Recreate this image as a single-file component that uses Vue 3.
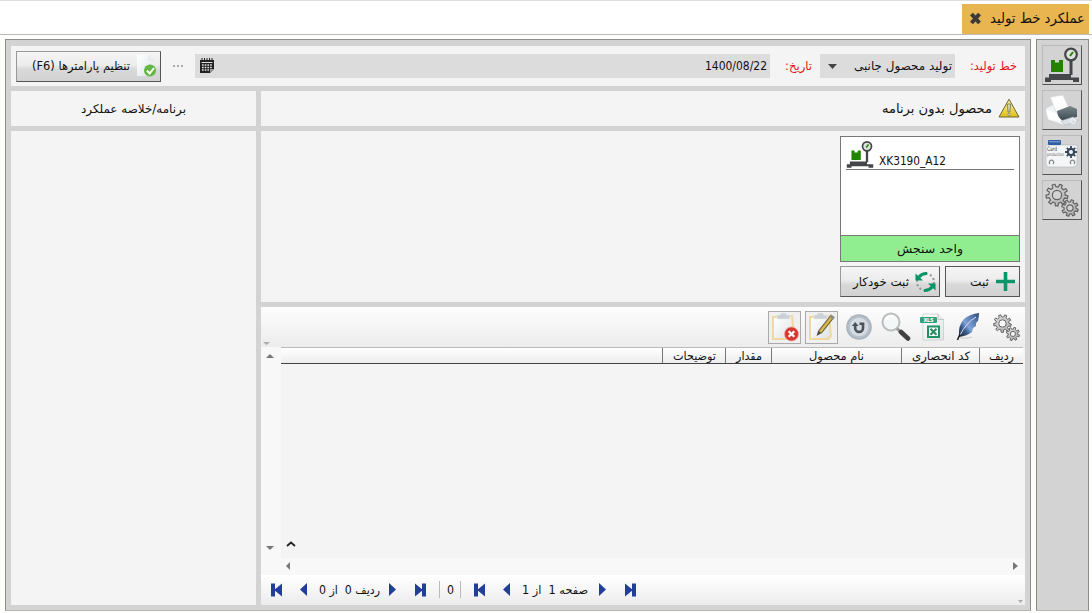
<script setup>
import { h } from 'vue'

// Single-line label condensed to a given width, centred on its own line box.
const Label = (props) =>
  h('svg', { class: 'label', width: props.w, height: 20, viewBox: `0 0 ${props.w} 20` }, [
    h('text', {
      x: props.w / 2,
      y: 14,
      fill: 'currentColor',
      'text-anchor': 'middle',
      textLength: props.w,
      lengthAdjust: 'spacingAndGlyphs',
      direction: props.ltr ? 'ltr' : 'rtl',
      'font-size': props.size || 12,
    }, props.text),
  ])
Label.props = { w: Number, text: String, size: Number, ltr: Boolean }

// Toothed ring outline with a round hole.
const gear = (cx, cy, outer, inner, hole, teeth, turn = 0) => {
  const step = (Math.PI * 2) / teeth
  const at = (r, a) => `${(cx + r * Math.cos(a)).toFixed(2)} ${(cy + r * Math.sin(a)).toFixed(2)}`
  let d = ''
  for (let i = 0; i < teeth; i++) {
    const a = i * step + turn
    d += `${i ? 'L' : 'M'}${at(inner, a - step * 0.27)}L${at(outer, a - step * 0.19)}L${at(outer, a + step * 0.19)}L${at(inner, a + step * 0.27)}`
  }
  return `${d}ZM${at(hole, 0)}a${hole} ${hole} 0 1 0 ${-2 * hole} 0a${hole} ${hole} 0 1 0 ${2 * hole} 0Z`
}
const bigGear = gear(13, 13, 11, 8.2, 4.6, 9, 0.2)
const smallGear = gear(26, 26, 8.3, 6, 3.2, 8, 0.3)
const cardGear = gear(27, 15, 6, 4.3, 2, 8)

const columns = [
  { title: '', w: 0, cell: 'blank' },
  { title: 'توضیحات', w: 43, cell: 'notes' },
  { title: 'مقدار', w: 26, cell: 'amount' },
  { title: 'نام محصول', w: 55, cell: 'product' },
  { title: 'کد انحصاری', w: 58, cell: 'code' },
  { title: 'ردیف', w: 25, cell: 'row' },
]
const side = ['scale', 'printer', 'card', 'gears']
</script>

<template>
  <div class="app">
    <svg class="defs" width="0" height="0">
      <defs>
        <linearGradient id="yellow" x1="0" y1="0" x2="0" y2="1"><stop offset="0" stop-color="#fff6ac" /><stop offset="1" stop-color="#dfc014" /></linearGradient>
        <linearGradient id="feather" x1="1" y1="0" x2="0" y2="1"><stop offset="0" stop-color="#34496a" /><stop offset=".25" stop-color="#5578b0" /><stop offset=".55" stop-color="#7fa3d8" /><stop offset=".72" stop-color="#3c5a8c" /><stop offset="1" stop-color="#1c2430" /></linearGradient>
        <linearGradient id="dark" x1="0" y1="0" x2="0" y2="1"><stop offset="0" stop-color="#7b878d" /><stop offset="1" stop-color="#3b474e" /></linearGradient>
        <radialGradient id="disc"><stop offset="0" stop-color="#dfe5ec" /><stop offset=".75" stop-color="#bcc6d0" /><stop offset="1" stop-color="#a3aeb9" /></radialGradient>
        <linearGradient id="paper" x1="0" y1="0" x2="1" y2="1"><stop offset="0" stop-color="#fff" /><stop offset="1" stop-color="#dfe3e6" /></linearGradient>
        <linearGradient id="steel" x1="0" y1="0" x2="1" y2="1"><stop offset="0" stop-color="#e2e2e2" /><stop offset="1" stop-color="#a9a9a9" /></linearGradient>
        <symbol id="scale" viewBox="0 0 36 36">
          <path fill="#444649" d="M1 30.5h4V27h22v3.500h8V35h-6v-2H7v2H1z" />
          <path fill="#444649" d="M25.500 12h3v16h-3z" />
          <path fill="#218300" d="M7 13h4v2.500h4V13h4v12H7z" />
          <circle cx="27" cy="7.500" r="5.800" fill="#dde3dd" stroke="#444649" stroke-width="2.200" />
          <path d="M26 9l3-4" stroke="#218300" stroke-width="2" />
        </symbol>
        <symbol id="printer" viewBox="0 0 36 36">
          <path d="M2 16l8-4 22 6 2 9-15 6-15-5q-3-6-2-12z" fill="#f1f3f5" stroke="#c5c9cc" stroke-width=".6" />
          <path d="M6 5l13-2 6 13-13 4z" fill="#fefefe" stroke="#d0d0d0" stroke-width=".6" />
          <path d="M13 19l13-5 7 3v8l-14 4-5-4z" fill="url(#dark)" />
          <path d="M2 17l11 5 5 8-13-3z" fill="#fff" />
          <path d="M17 29l12-4 5 3-2 2-11 3z" fill="#dde2e7" stroke="#adb5bd" stroke-width=".6" />
          <circle cx="29" cy="29" r="2.500" fill="none" stroke="#f7f7f7" />
        </symbol>
        <symbol id="card" viewBox="0 0 36 36">
          <path d="M2 8h31v20l-3 2H4l-2-2z" fill="#f4f5f6" stroke="#b6bbc0" stroke-width=".7" />
          <rect x="4" y="3" width="13" height="5" rx="1" fill="#315d9e" /><path d="M5 4h11v1.400H5z" fill="#6f95ca" />
          <text x="3" y="14" font-size="6" fill="#454545" textLength="10" lengthAdjust="spacingAndGlyphs">Card</text>
          <text x="3" y="18.500" font-size="4.500" fill="#555" textLength="17" lengthAdjust="spacingAndGlyphs">production</text>
          <path :d="cardGear" fill="#38475c" fill-rule="evenodd" />
          <path d="M6 27a2.200 2.200 0 1 1 3 0M27 27a2.200 2.200 0 1 1 3 0" fill="none" stroke="#888" stroke-width="1.300" />
        </symbol>
        <symbol id="gears" viewBox="0 0 36 36">
          <g fill="url(#steel)" fill-rule="evenodd" stroke="#626262" stroke-width="1.200" stroke-linejoin="round">
            <path :d="bigGear" /><path :d="smallGear" />
          </g>
        </symbol>
        <symbol id="clipboard" viewBox="0 0 30 30">
          <path d="M3 4l21-1 2 21-3 4H3z" fill="#efd9a0" />
          <path d="M5 6l17-1 2 18-3 3H5z" fill="url(#paper)" />
          <path d="M8 3h3l1-2h5l1 2h3v4H8z" fill="#cbd0d4" stroke="#e8ebed" stroke-width=".6" />
        </symbol>
        <symbol id="first" viewBox="0 0 12 14"><path d="M0 .5h4v5.700L11 .5v13L4 7.800v5.700H0z" fill="#213f99" /></symbol>
        <symbol id="prev" viewBox="0 0 7 13"><path d="M7 0v13L0 6.500z" fill="#213f99" /></symbol>
      </defs>
    </svg>

    <header class="tabs">
      <div class="tab">
        <svg width="13" height="13" viewBox="0 0 13 13"><path d="M2.500 2l8 9M10.500 2l-8 9" stroke="#3b3a35" stroke-width="4" /></svg>
        <Label :w="95" :size="14" text="عملکرد خط تولید" />
      </div>
    </header>

    <div class="workspace">
      <main class="frame">
        <section class="panel filters">
          <button class="btn settings">
            <Label :w="98" text="تنظیم پارامترها (F6)" />
            <svg width="21" height="24" viewBox="0 0 21 24">
              <path d="M1 1h12l5 5v16H1z" fill="url(#paper)" /><path d="M13 1v5h5" fill="#edf0f1" stroke="#d8dcde" stroke-width=".6" />
              <circle cx="14" cy="16.500" r="6" fill="#62b843" /><path d="M11 16.500l2.700 3 4.300-5.500" fill="none" stroke="#fff" stroke-width="2" />
            </svg>
          </button>
          <span class="dots"><i /><i /><i /></span>
          <div class="field date">
            <svg width="16" height="16" viewBox="0 0 16 16">
              <path d="M1 2h14v9l-4 4H1z" fill="#222" /><path d="M3 0v3M5.500 0v3M8 0v3M10.500 0v3M13 0v3" stroke="#222" />
              <path d="M2.500 4.500h11" stroke="#ddd" /><path d="M3 7h10M3 9.500h10M3 12h7" stroke="#ddd" stroke-width="1.500" stroke-dasharray="1.700 1" /><path d="M11 11h4l-4 4z" fill="#999" />
            </svg>
            <Label :w="62" ltr :size="12.5" text="1400/08/22" />
          </div>
          <Label class="red date-name" :w="27" text="تاریخ:" />
          <div class="field line">
            <svg width="9" height="5" viewBox="0 0 9 5"><path d="M0 0h9L4.500 5z" fill="#444" /></svg>
            <Label :w="98" text="تولید محصول جانبی" />
          </div>
          <Label class="red line-name" :w="47" text="خط تولید:" />
        </section>

        <div class="columns">
          <aside class="summary">
            <div class="panel heading centered"><Label :w="105" text="برنامه/خلاصه عملکرد" /></div>
            <div class="panel grow" />
          </aside>
          <div class="content">
            <div class="panel heading unplanned">
              <Label :w="110" :size="13" text="محصول بدون برنامه" />
              <svg width="22" height="21" viewBox="0 0 22 21"><path d="M11 1.200L21 19H1z" fill="url(#yellow)" stroke="#6b6637" stroke-linejoin="round" /><path d="M9.500 6h3l-.6 8h-1.800z" fill="#e4e1cb" stroke="#6d694b" stroke-width=".8" /><circle cx="11" cy="16.400" r="1.200" fill="#e8e4c8" stroke="#6d694b" stroke-width=".6" /></svg>
            </div>

            <div class="panel devices">
              <div class="device">
                <div class="device-head">
                  <svg width="28" height="29"><use href="#scale" /></svg>
                  <Label :w="67" ltr :size="12.5" text="XK3190_A12" />
                </div>
                <div class="device-body" />
                <div class="unit"><Label :w="66" text="واحد سنجش" /></div>
              </div>
              <div class="actions">
                <button class="btn auto">
                  <Label :w="56" text="ثبت خودکار" />
                  <svg width="21" height="22" viewBox="0 0 21 22"><circle cx="10.500" cy="11" r="8.500" fill="none" stroke="#969a9e" stroke-width="2.200" stroke-dasharray="2 2.450" /><path d="M3.500 5.500Q7 1.500 12 2.300" stroke="#f0f0f0" stroke-width="5" fill="none" /><path d="M17.500 16.500Q14 20.500 9 19.700" stroke="#dadada" stroke-width="5" fill="none" /><path d="M4 6Q7 2.200 12 2.500M17 16Q14 19.800 9 19.500" stroke="#079465" stroke-width="3" fill="none" /><path d="M.5 2.500V9.500h7.500zM20.500 19.500v-7H13z" fill="#079465" /></svg>
                </button>
                <button class="btn save">
                  <Label :w="19" text="ثبت" />
                  <svg width="19" height="19" viewBox="0 0 19 19"><path d="M9.500 0v19M0 9.500h19" stroke="#0a966b" stroke-width="3.600" /></svg>
                </button>
              </div>
            </div>

            <div class="grid-panel">
              <div class="toolbar">
                <svg class="overflow" width="7" height="3"><path d="M0 0h7L3.500 3z" fill="#aaa" /></svg>
                <span class="boxed"><svg width="31" height="30" viewBox="0 0 31 30"><use href="#clipboard" width="30" height="30" /><circle cx="22.500" cy="22" r="7" fill="#d93830" stroke="#eaa09a" stroke-width=".7" /><path d="M19.700 19.200l5.600 5.600M25.300 19.200l-5.600 5.600" stroke="#fff" stroke-width="2.200" /></svg></span>
                <span class="boxed"><svg width="31" height="30" viewBox="0 0 31 30"><use href="#clipboard" width="30" height="30" /><path d="M25.500 5.500L14 20" stroke="#6b6448" stroke-width="4.500" /><path d="M25.500 5.500L14 20" stroke="#dab642" stroke-width="2.500" /><path d="M12.300 18.500L10.500 24l5-2.800z" fill="#4d4a44" /><path d="M24 3.500l4 3" stroke="#8f8b86" stroke-width="3" /></svg></span>
                <svg class="refresh" width="28" height="28" viewBox="0 0 28 28"><circle cx="14" cy="14" r="12.800" fill="url(#disc)" /><circle cx="14" cy="14" r="9.800" fill="#d4dbe2" stroke="#b6bfc8" /><path d="M10.200 12v3a3.900 3.900 0 0 0 7.800 0v-4" fill="none" stroke="#4a525c" stroke-width="2.600" /><path d="M6.800 13l3.400-4 3.400 4zM14.500 9.500h4.800v2.500h-4.800z" fill="#4a525c" /></svg>
                <svg class="search" width="30" height="30" viewBox="0 0 30 30"><circle cx="10" cy="10" r="8.500" fill="#f4f7f8" stroke="#bbbebf" stroke-width="2" /><path d="M4.500 8q3-4.500 8-3.500" stroke="#fff" stroke-width="2" fill="none" /><path d="M16 16.500l3.500 3.500" stroke="#989898" stroke-width="3" /><path d="M20 20l7 6.500" stroke="#414141" stroke-width="4.600" stroke-linecap="round" /></svg>
                <svg class="xls" width="26" height="28" viewBox="0 0 26 28"><path d="M4 1h15l5.500 5.500V27H4z" fill="url(#paper)" stroke="#c3c8c8" stroke-width=".7" /><path d="M19 1v5.500h5.500" fill="#eee" stroke="#aaa" stroke-width=".6" /><rect x="1" y="4" width="17" height="6" rx="1" fill="#36a07a" /><text x="4.500" y="9" font-size="5.500" font-weight="bold" fill="#fff" textLength="10">XLS</text><path d="M9 13.500h11v10.500H9z" fill="#fff" stroke="#239263" stroke-width="2" /><path d="M11.500 15.800l6 6M17.500 15.800l-6 6" stroke="#239263" stroke-width="2.200" /></svg>
                <svg class="quill" width="24" height="28" viewBox="0 0 24 28"><path d="M23 0Q14 1 8 6 2 12 3 24q8-1 13-5l1-4 3-2v-3l2-2q1-4 1-8z" fill="url(#feather)" /><path d="M20 4Q10 10 4 22" fill="none" stroke="#d9e5f5" /><path d="M4 21l-2.500 6" stroke="#222" stroke-width="1.600" /><path d="M4 25q7 1 12-1" stroke="#ccc" fill="none" /></svg>
                <svg class="cogs" width="29" height="29"><use href="#gears" /></svg>
              </div>
              <div class="table">
                <div class="vscroll">
                  <svg width="8" height="4"><path d="M0 4h8L4 0z" fill="#777" /></svg>
                  <svg width="8" height="4"><path d="M0 0h8L4 4z" fill="#777" /></svg>
                </div>
                <div class="sheet">
                  <div class="thead">
                    <div v-for="c in columns" :key="c.cell" :class="['th', c.cell]"><Label v-if="c.title" :w="c.w" :size="11.5" :text="c.title" /></div>
                  </div>
                  <div class="rows"><svg width="10" height="6" viewBox="0 0 10 6"><path d="M1 5l4-3.500L9 5" fill="none" stroke="#222" stroke-width="1.800" /></svg></div>
                  <div class="hscroll">
                    <svg width="4" height="8"><path d="M4 0v8L0 4z" fill="#777" /></svg>
                    <svg width="5" height="8"><path d="M0 0v8l5-4z" fill="#777" /></svg>
                  </div>
                </div>
              </div>
              <footer class="pager">
                <svg class="end" width="12" height="14"><use href="#first" /></svg>
                <svg class="step" width="7" height="13"><use href="#prev" /></svg>
                <Label :w="61" :size="11.5" text="ردیف&#160;0&#160; از&#160;0" />
                <svg class="step flip" width="7" height="13"><use href="#prev" /></svg>
                <svg class="end flip" width="12" height="14"><use href="#first" /></svg>
                <span class="count"><Label :w="7" ltr text="0" /></span>
                <svg class="end" width="12" height="14"><use href="#first" /></svg>
                <svg class="step" width="7" height="13"><use href="#prev" /></svg>
                <Label :w="66" :size="11.5" text="صفحه&#160;1&#160; از&#160;1" />
                <svg class="step flip" width="7" height="13"><use href="#prev" /></svg>
                <svg class="end flip" width="12" height="14"><use href="#first" /></svg>
                <svg class="more" width="5" height="3"><path d="M0 0h5L2.500 3z" fill="#aaa" /></svg>
              </footer>
            </div>
          </div>
        </div>
      </main>

      <nav class="frame rail">
        <button v-for="name in side" :key="name" class="rail-btn"><svg width="36" height="36"><use :href="'#' + name" /></svg></button>
      </nav>
    </div>
  </div>
</template>

<style>
body { background: #fff; }
</style>

<style scoped>
* { box-sizing: border-box; }
.app { width: 1092px; height: 613px; overflow: hidden; display: flex; flex-direction: column; background: #fdfdfb; color: #111; font-family: "DejaVu Sans Condensed", "DejaVu Sans", sans-serif; }
.defs { position: absolute; }
svg { display: block; flex: none; }
.label { overflow: visible; }
button { font: inherit; color: inherit; padding: 0; }
.tabs { height: 35px; flex: none; display: flex; justify-content: flex-end; align-items: flex-end; padding-right: 3px; background: #fff; border-top: 1px solid #ddd; border-bottom: 1px solid #bbb; }
.tab { width: 127px; height: 30px; background: #e9b550; display: flex; align-items: center; padding: 0 4px 1px 7px; justify-content: space-between; }
.workspace { margin-top: 4px; height: 572px; display: flex; gap: 5px; padding-left: 5px; }
.frame { background: #d3d3d3; border: 1px solid #8c8c8c; border-bottom-color: #b5b5b5; }
main.frame { width: 1026px; padding: 6px 5px 5px; display: flex; flex-direction: column; gap: 5px; }
.panel { background: #f4f4f4; }
.filters { height: 40px; flex: none; display: flex; align-items: center; padding: 0 8px 0 5px; }
.btn { height: 31px; display: flex; align-items: center; background: linear-gradient(#f5f5f5, #ececec 45%, #d9d9d9 60%, #d2d2d2); border: 1px solid #999; border-right-color: #555; border-bottom-color: #555; }
.settings { width: 145px; justify-content: flex-end; gap: 6px; padding-right: 3px; }
.dots { display: flex; gap: 2px; margin-left: 12px; }
.dots i { width: 2px; height: 2px; background: #aaa; }
.field { height: 24px; background: #dcdcdc; display: flex; align-items: center; justify-content: space-between; }
.date { width: 575px; margin-left: 12px; padding: 0 3px 0 4px; }
.date-name { margin-left: 15px; }
.line { width: 135px; margin-left: 8px; padding: 0 3px 0 8px; }
.line-name { margin-left: auto; }
.red { color: #e0161b; }
.columns { flex: 1; display: flex; gap: 5px; min-height: 0; }
.summary, .content { display: flex; flex-direction: column; gap: 5px; }
.summary { width: 245px; }
.content { flex: 1; }
.grow { flex: 1; }
.heading { height: 35px; flex: none; display: flex; align-items: center; }
.centered { justify-content: center; }
.unplanned { justify-content: flex-end; gap: 6px; padding-right: 5px; }
.devices { height: 171px; flex: none; display: flex; flex-direction: column; align-items: flex-end; gap: 4px; padding: 5px 5px 0; }
.device { width: 180px; height: 126px; border: 1px solid #777; background: #fff; display: flex; flex-direction: column; }
.device-head { height: 33px; margin: 0 5px; border-bottom: 1px solid #777; display: flex; gap: 5px; padding-top: 3px; align-items: flex-start; }
.device-head .label { margin-top: 11px; }
.device-body { flex: 1; }
.unit { height: 26px; border-top: 1px solid #777; background: #90ee90; display: flex; justify-content: center; align-items: center; }
.actions { display: flex; gap: 5px; }
.auto { width: 100px; justify-content: flex-end; gap: 6px; padding-right: 3px; }
.save { width: 75px; justify-content: flex-end; gap: 7px; padding-right: 4px; border-color: #555; }
.grid-panel { flex: 1; display: flex; flex-direction: column; min-height: 0; }
.toolbar { height: 40px; display: flex; align-items: center; justify-content: flex-end; padding-right: 4px; background: linear-gradient(#fdfdfd, #ececec); }
.overflow { margin: 33px auto 0 2px; }
.boxed { width: 33px; height: 33px; border: 1px solid #aaa; background: #f0f0f0; margin-right: 4px; }
.refresh { margin-left: 3px; }
.search { margin-left: 8px; }
.xls { margin-left: 8px; }
.quill { margin-left: 11px; }
.cogs { margin-left: 12px; }
.table { flex: 1; display: flex; background: #f4f4f4; }
.vscroll { width: 20px; background: #f8f8f8; display: flex; flex-direction: column; justify-content: space-between; padding: 7px 0 25px 5px; }
.sheet { flex: 1; display: flex; flex-direction: column; }
.thead { height: 17px; margin-right: 2px; display: flex; background: linear-gradient(#fff, #ededed); border-top: 1px solid #bbb; border-bottom: 1px solid #444; }
.th { border-right: 1px solid #777; display: flex; justify-content: center; align-items: center; }
.blank { flex: 1; }
.notes { width: 63px; }
.amount { width: 46px; }
.product { width: 130px; }
.code { width: 78px; }
.row { width: 43px; border-right: 0; }
.rows { flex: 1; display: flex; align-items: flex-end; padding: 0 0 11px 5px; }
.hscroll { height: 17px; background: #f8f8f8; display: flex; align-items: center; justify-content: space-between; padding: 0 7px 1px 5px; }
.pager { height: 30px; display: flex; align-items: center; padding: 0 2px 1px 10px; background: linear-gradient(#fff, #ececec); }
.step { margin: 0 12px 0 17px; }
.flip { transform: scaleX(-1); }
.step.flip { margin: 0 18px 0 9px; }
.count { width: 22px; height: 17px; margin: 0 13px 0 13px; border: solid #bbb; border-width: 0 1px; display: flex; justify-content: center; align-items: center; }
.count ~ .step.flip { margin-left: 11px; }
.more { margin: 24px 0 0 auto; }
.rail { width: 53px; padding: 5px; display: flex; flex-direction: column; gap: 5px; }
.rail-btn { width: 40px; height: 40px; background: #d3d3d3; border: 1px solid #bbb; border-right-color: #555; border-bottom-color: #555; display: flex; align-items: center; justify-content: center; flex: none; }
</style>
